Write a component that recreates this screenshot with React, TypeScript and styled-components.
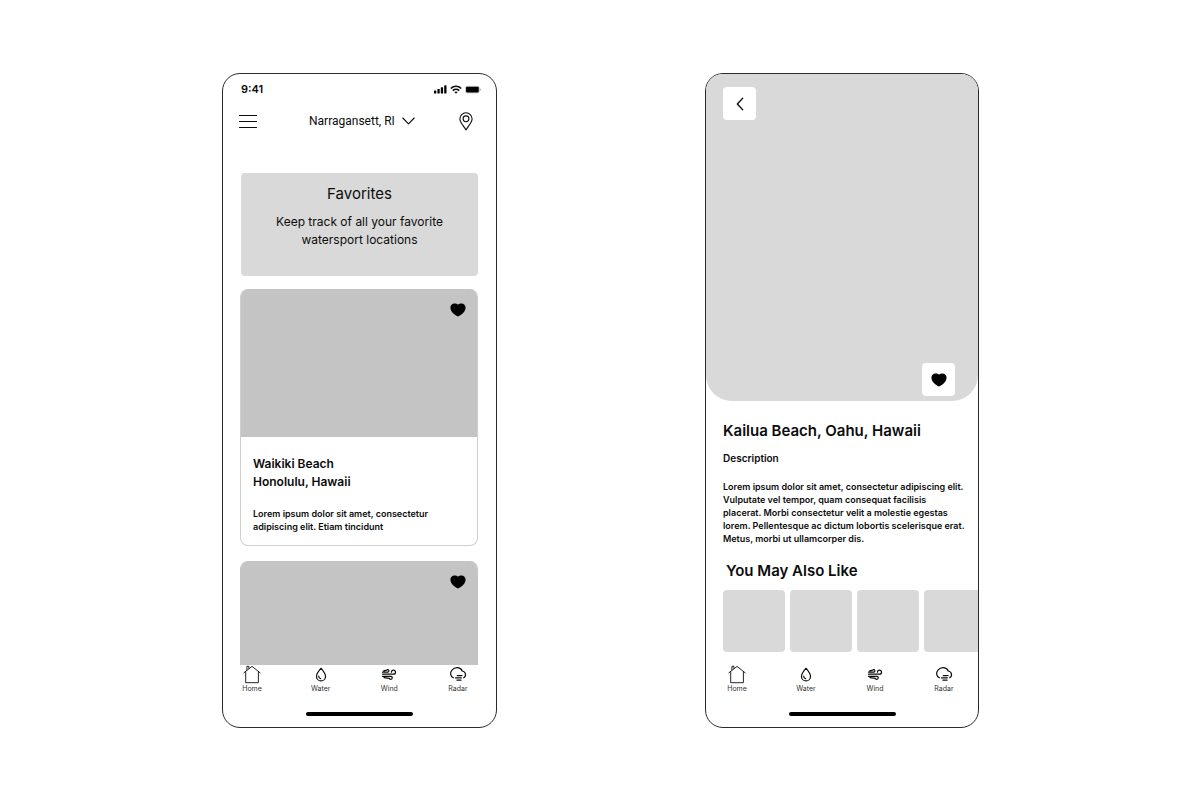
import React from "react";
import styled, { createGlobalStyle } from "styled-components";

const GlobalStyle = createGlobalStyle`
  * { box-sizing: border-box; }
  body {
    margin: 0;
    background: #fff;
    color: #0c0c0c;
    font-family: Inter, "Liberation Sans", sans-serif;
  }
  h1, h2, h3, p, ul { margin: 0; padding: 0; }
  button, select { font: inherit; color: inherit; }
`;

const Board = styled.main`
  display: flex;
  flex-wrap: wrap;
  justify-content: center;
  gap: 73px 208px;
  padding: 73px 24px 72px 25px;
`;

const Phone = styled.section<{ $width: number }>`
  display: flex;
  flex-direction: column;
  width: 100%;
  max-width: ${(p) => p.$width}px;
  min-height: 655px;
  border: 1px solid #2b2b2b;
  border-radius: 18px;
  background: #fff;
  overflow: hidden;
`;

const StatusBar = styled.div`
  display: flex;
  align-items: center;
  justify-content: space-between;
  padding: 8px 15px 0 18px;
  font-size: 11px;
  line-height: 14px;
  font-weight: 600;
`;

const StatusIcons = styled.div`
  display: flex;
  align-items: center;
  gap: 3px;
`;

const TopBar = styled.header`
  display: flex;
  align-items: center;
  justify-content: space-between;
  padding: 10px 23px 0 16px;
  height: 40px;
`;

const IconButton = styled.button`
  display: flex;
  padding: 0;
  border: 0;
  background: none;
  cursor: pointer;
`;

const Location = styled.label`
  display: grid;
  align-items: center;
  justify-items: end;
  margin-left: 8px;
  & > * { grid-area: 1 / 1; }
  & > svg { pointer-events: none; }
`;

const LocationSelect = styled.select`
  appearance: none;
  border: 0;
  background: none;
  padding: 0 20px 0 0;
  font-family: Roboto, "Liberation Sans", sans-serif;
  font-size: 12px;
  line-height: 16px;
`;

const Feed = styled.div`
  display: flex;
  flex-direction: column;
  padding: 37px 18px 0 17px;
`;

const Banner = styled.div`
  margin: 0 0 13px 1px;
  padding: 10px 16px 27px;
  border-radius: 4px;
  background: #d9d9d9;
  text-align: center;
`;

const BannerTitle = styled.h1`
  margin-bottom: 9px;
  font-size: 15px;
  line-height: 21px;
  font-weight: 400;
`;

const BannerText = styled.p`
  font-size: 12px;
  line-height: 18px;
`;

const Card = styled.article<{ $cut?: boolean }>`
  margin-bottom: ${(p) => (p.$cut ? "0" : "15px")};
  border: 1px solid ${(p) => (p.$cut ? "#c4c4c4" : "#cfcfcf")};
  border-width: ${(p) => (p.$cut ? "0 1px" : "0 1px 1px")};
  border-radius: ${(p) => (p.$cut ? "8px 8px 0 0" : "8px")};
  overflow: hidden;
`;

const CardImage = styled.div<{ $height: number }>`
  display: flex;
  justify-content: flex-end;
  align-items: flex-start;
  height: ${(p) => p.$height}px;
  padding: 14px 11px 0;
  background: #c4c4c4;
`;

const CardBody = styled.div`
  padding: 18px 12px 12px;
`;

const CardTitle = styled.h2`
  margin-bottom: 16px;
  font-size: 12px;
  line-height: 18px;
  font-weight: 600;
`;

const SmallText = styled.p`
  font-size: 9px;
  line-height: 13px;
  font-weight: 600;
`;

const Hero = styled.div`
  display: flex;
  flex-direction: column;
  justify-content: space-between;
  height: 327px;
  padding: 13px 23px 5px 17px;
  border-radius: 0 0 26px 26px;
  background: #d9d9d9;
`;

const TileButton = styled(IconButton)<{ $end?: boolean }>`
  align-items: center;
  justify-content: center;
  align-self: ${(p) => (p.$end ? "flex-end" : "flex-start")};
  width: 33px;
  height: 33px;
  border-radius: 4px;
  background: #fff;
`;

const Details = styled.div`
  padding: 20px 8px 0 17px;
`;

const Title = styled.h2`
  font-size: 15px;
  line-height: 20px;
  font-weight: 600;
`;

const Subtitle = styled.h3`
  margin: 10px 0 15px;
  font-size: 10px;
  line-height: 14px;
  font-weight: 600;
`;

const Related = styled.section`
  padding: 16px 0 0 17px;
  & > ${Title} { padding-left: 3px; }
`;

const Tiles = styled.ul`
  display: flex;
  gap: 5px;
  margin-top: 9px;
  list-style: none;
  overflow: hidden;
`;

const Tile = styled.li`
  flex: none;
  width: 62px;
  height: 62px;
  border-radius: 4px;
  background: #d9d9d9;
`;

const TabBar = styled.nav<{ $inset: number; $insetEnd: number }>`
  display: flex;
  justify-content: space-between;
  margin-top: auto;
  padding: 0 ${(p) => p.$insetEnd}px 18px ${(p) => p.$inset}px;
`;

const Tab = styled.a`
  display: flex;
  flex-direction: column;
  align-items: center;
  width: 34px;
  color: #333;
  font-size: 7px;
  line-height: 10px;
  text-decoration: none;
  & > svg { color: #0c0c0c; }
`;

const HomeIndicator = styled.div`
  width: 107px;
  height: 4px;
  margin: 0 auto 11px;
  border-radius: 2px;
  background: #000;
`;

const SignalIcon = () => (
  <svg width="13" height="9" viewBox="0 0 13 9" aria-hidden="true">
    <rect x="0" y="5.5" width="2.3" height="3" rx=".6" />
    <rect x="3.4" y="4" width="2.3" height="4.5" rx=".6" />
    <rect x="6.8" y="2.2" width="2.3" height="6.3" rx=".6" />
    <rect x="10.2" y=".3" width="2.3" height="8.2" rx=".6" />
  </svg>
);

const WifiIcon = () => (
  <svg width="12" height="9" viewBox="0 0 12 9" fill="none" stroke="currentColor" strokeWidth="1.6" aria-hidden="true">
    <path d="M.8 3.5C3.7.5 8.3.5 11.2 3.5M2.8 5.6c1.8-1.7 4.6-1.7 6.4 0" />
    <path d="M4.3 7.1c1-.9 2.4-.9 3.4 0L6 8.8Z" fill="currentColor" stroke="none" />
  </svg>
);

const BatteryIcon = () => (
  <svg width="16" height="9" viewBox="0 0 16 9" aria-hidden="true">
    <rect x=".3" y="1.3" width="14" height="6.6" rx="1.8" fill="#fff" stroke="#888" strokeWidth=".5" />
    <rect x="1" y="1.8" width="12.8" height="5.6" rx="1.1" />
    <path d="M15 3.4c.9.5.9 1.9 0 2.4Z" fill="#888" />
  </svg>
);

const MenuIcon = () => (
  <svg width="18" height="14" viewBox="0 0 18 14" stroke="currentColor" strokeWidth="1" aria-hidden="true">
    <path d="M0 1.5h18M0 7.5h18M0 13.5h18" />
  </svg>
);

const ChevronDown = () => (
  <svg width="13" height="8" viewBox="0 0 13 8" fill="none" stroke="currentColor" strokeWidth="1.1" strokeLinecap="round" strokeLinejoin="round" aria-hidden="true">
    <path d="m.8 1 5.7 5.8L12.200 1" />
  </svg>
);

const PinIcon = () => (
  <svg width="14" height="19" viewBox="0 0 14 19" fill="none" stroke="currentColor" strokeWidth="1.1" strokeLinejoin="round" aria-hidden="true">
    <path d="M7 17.9C5.4 14.9.9 10.4.9 6.9a6.1 6.1 0 0 1 12.2 0C13.1 10.4 8.6 14.9 7 17.9Z" />
    <circle cx="7" cy="6.8" r="2.9" />
  </svg>
);

const ChevronLeft = () => (
  <svg width="8" height="14" viewBox="0 0 8 14" fill="none" stroke="currentColor" strokeWidth="1.3" strokeLinecap="round" strokeLinejoin="round" aria-hidden="true">
    <path d="M6.7 1.3 1.3 7l5.4 5.7" />
  </svg>
);

const HeartIcon = () => (
  <svg width="16" height="14" viewBox="0 0 16 14" fill="#000" aria-hidden="true">
    <path d="M8 13.5C7.3 13.5.4 9.7.4 4.8.4 2.2 2.2.5 4.5.5 6 .5 7.2.9 8 1.6 8.8.9 10 .5 11.5.5c2.3 0 4.1 1.7 4.1 4.3C15.600 9.700 8.700 13.500 8 13.500Z" />
  </svg>
);

const HomeIcon = () => (
  <svg width="20" height="19" viewBox="0 0 20 19" fill="none" stroke="currentColor" strokeWidth=".9" aria-hidden="true">
    <path d="M1.6 8 10 1.4 18.4 8M3.7 6.600v11.100h12.700V6.600M4.900 5.300V1.300h2v2.400" />
  </svg>
);

const WaterIcon = () => (
  <svg width="20" height="19" viewBox="0 0 20 19" fill="none" stroke="currentColor" strokeWidth="1.2" strokeLinecap="round" strokeLinejoin="round" aria-hidden="true">
    <path d="M10 3.3C8.3 5.3 5.5 8.500 5.500 11.400a4.500 4.500 0 0 0 9 0C14.500 8.500 11.700 5.300 10 3.300Z" />
    <path d="M7.700 11.200c0 1.300.7 2.200 1.900 2.500" />
  </svg>
);

const WindIcon = () => (
  <svg width="20" height="19" viewBox="0 0 20 19" fill="none" stroke="currentColor" strokeWidth="1.2" strokeLinecap="round" strokeLinejoin="round" aria-hidden="true">
    <path d="M3.500 9.200h11a2 2 0 1 0-2-2" />
    <path d="M3.500 7.100h5.200a1.200 1.200 0 1 0-1-1.900L4.700 5.900" />
    <path d="M3.500 11.300h8.400a1.500 1.500 0 1 1-1.500 2.100L5 12.700" />
  </svg>
);

const RadarIcon = () => (
  <svg width="20" height="19" viewBox="0 0 20 19" fill="none" stroke="currentColor" strokeWidth="1.2" strokeLinecap="round" strokeLinejoin="round" aria-hidden="true">
    <path d="M5.400 12.800C2.200 11.500 1.800 7.600 4 5.200 7 1.200 13 1.900 14.200 6c3.900.7 4.300 5.300 1.500 6.800" />
    <path d="M9.300 10.700h4.700M7.500 12.900h5.800M8.900 15.100h4.200" />
  </svg>
);

const tabs = [
  { name: "Home", Icon: HomeIcon },
  { name: "Water", Icon: WaterIcon },
  { name: "Wind", Icon: WindIcon },
  { name: "Radar", Icon: RadarIcon },
];

const PhoneFooter = ({ inset, insetEnd }: { inset: number; insetEnd: number }) => (
  <>
    <TabBar $inset={inset} $insetEnd={insetEnd} aria-label="Main">
      {tabs.map(({ name, Icon }) => (
        <Tab key={name} href={`#${name.toLowerCase()}`}>
          <Icon />
          {name}
        </Tab>
      ))}
    </TabBar>
    <HomeIndicator />
  </>
);

export default function App() {
  return (
    <>
      <GlobalStyle />
      <Board>
        <Phone $width={275} aria-label="Favorites">
          <StatusBar>
            <span>9:41</span>
            <StatusIcons>
              <SignalIcon />
              <WifiIcon />
              <BatteryIcon />
            </StatusIcons>
          </StatusBar>
          <TopBar>
            <IconButton aria-label="Menu"><MenuIcon /></IconButton>
            <Location>
              <LocationSelect aria-label="Location">
                <option>Narragansett, RI</option>
              </LocationSelect>
              <ChevronDown />
            </Location>
            <IconButton aria-label="Map"><PinIcon /></IconButton>
          </TopBar>
          <Feed>
            <Banner>
              <BannerTitle>Favorites</BannerTitle>
              <BannerText>
                Keep track of all your favorite
                <br />
                watersport locations
              </BannerText>
            </Banner>
            <Card>
              <CardImage $height={148}>
                <IconButton aria-label="Remove from favorites"><HeartIcon /></IconButton>
              </CardImage>
              <CardBody>
                <CardTitle>
                  Waikiki Beach
                  <br />
                  Honolulu, Hawaii
                </CardTitle>
                <SmallText>
                  Lorem ipsum dolor sit amet, consectetur
                  <br />
                  adipiscing elit. Etiam tincidunt
                </SmallText>
              </CardBody>
            </Card>
            <Card $cut>
              <CardImage $height={104}>
                <IconButton aria-label="Remove from favorites"><HeartIcon /></IconButton>
              </CardImage>
            </Card>
          </Feed>
          <PhoneFooter inset={12} insetEnd={21} />
        </Phone>

        <Phone $width={274} aria-label="Location details">
          <Hero>
            <TileButton aria-label="Back"><ChevronLeft /></TileButton>
            <TileButton $end aria-label="Remove from favorites"><HeartIcon /></TileButton>
          </Hero>
          <Details>
            <Title>Kailua Beach, Oahu, Hawaii</Title>
            <Subtitle>Description</Subtitle>
            <SmallText>
              Lorem ipsum dolor sit amet, consectetur adipiscing elit.
              <br />
              Vulputate vel tempor, quam consequat facilisis
              <br />
              placerat. Morbi consectetur velit a molestie egestas
              <br />
              lorem. Pellentesque ac dictum lobortis scelerisque erat.
              <br />
              Metus, morbi ut ullamcorper dis.
            </SmallText>
          </Details>
          <Related>
            <Title>You May Also Like</Title>
            <Tiles>
              <Tile />
              <Tile />
              <Tile />
              <Tile />
            </Tiles>
          </Related>
          <PhoneFooter inset={14} insetEnd={17} />
        </Phone>
      </Board>
    </>
  );
}
